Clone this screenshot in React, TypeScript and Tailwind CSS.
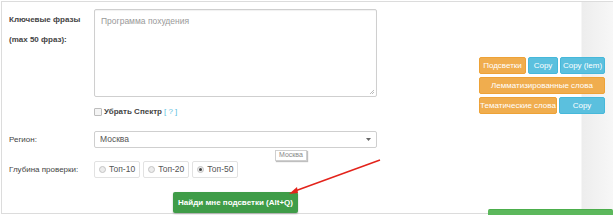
import React from 'react';

const orange = 'bg-[#f0ad4e] border border-[#eea236]';
const blue = 'bg-[#5bc0de] border border-[#46b8da]';

function SmallButton({ label, className }: { label: string; className: string }) {
    return (
        <button
            className={`h-[17px] rounded-[2px] text-[8px] leading-none text-white whitespace-nowrap flex items-center justify-center ${className}`}
        >
            {label}
        </button>
    );
}

function RadioBox({ label, checked }: { label: string; checked?: boolean }) {
    return (
        <label className="h-[17px] px-[4px] flex items-center gap-[3px] rounded-[2px] border border-[#e2e2e2] text-[8.5px] text-[#555]">
            <span className="w-[7px] h-[7px] rounded-full border border-[#c4c4c4] bg-[#ececec] flex items-center justify-center">
                {checked && <span className="w-[3px] h-[3px] rounded-full bg-[#444]" />}
            </span>
            {label}
        </label>
    );
}

export default function App() {
    return (
        <div className="relative w-[613px] h-[215px] overflow-hidden bg-white font-['Liberation_Sans',Arial,sans-serif]">
            <div className="mt-px ml-px h-[213px] border-l border-t border-b border-[#dcdcdc] flex bg-[linear-gradient(to_right,#ffffff_579px,#ededed_580px,#f7f7f7_100%)]">
                {/* form */}
                <div className="pl-[7px] pt-[7px] w-[380px]">
                    <div className="grid grid-cols-[85px_283px]">
                        <div className="text-[8px] font-bold text-[#444] leading-[20px] pt-[1px]">
                            <div>Ключевые фразы</div>
                            <div>(max 50 фраз):</div>
                        </div>
                        <div className="relative h-[88px] rounded-[2px] border border-[#cfcfcf] shadow-[inset_0_1px_1px_rgba(0,0,0,0.06)]">
                            <div className="pl-[6px] pt-[5px] text-[8.5px] text-[#999]">Программа похудения</div>
                            <svg className="absolute right-[1px] bottom-[1px]" width="6" height="6" viewBox="0 0 6 6">
                                <path d="M5 1 L1 5 M5 3 L3 5" stroke="#aaa" strokeWidth="0.8" />
                            </svg>
                        </div>
                    </div>

                    <div className="mt-[9px] ml-[85px] flex items-center gap-[2px] text-[8px]">
                        <span className="w-[8px] h-[8px] rounded-[1px] border border-[#bdbdbd] bg-[#f4f4f4]" />
                        <span className="font-bold text-[#444]">Убрать Спектр</span>
                        <span className="text-[#5bc0de]">[ ? ]</span>
                    </div>

                    <div className="mt-[13px] grid grid-cols-[85px_283px] items-center">
                        <div className="text-[8px] text-[#444]">Регион:</div>
                        <div className="h-[17px] rounded-[2px] border border-[#cfcfcf] flex items-center justify-between pl-[5px] pr-[5px] text-[8.5px] text-[#555]">
                            <span>Москва</span>
                            <svg width="5" height="3" viewBox="0 0 5 3">
                                <path d="M0 0 L5 0 L2.5 3 Z" fill="#666" />
                            </svg>
                        </div>
                    </div>

                    <div className="mt-[13px] grid grid-cols-[85px_283px] items-center">
                        <div className="text-[8px] text-[#444]">Глубина проверки:</div>
                        <div className="flex gap-[3px]">
                            <RadioBox label="Топ-10" />
                            <RadioBox label="Топ-20" />
                            <RadioBox label="Топ-50" checked />
                        </div>
                    </div>

                    <div className="mt-[14px] ml-[85px] w-[283px] flex justify-center">
                        <button className="w-[125px] h-[21px] rounded-[2px] bg-[#3f9c48] text-white text-[8px] font-bold whitespace-nowrap shadow-[0_1px_2px_rgba(0,0,0,0.25)]">
                            Найди мне подсветки (Alt+Q)
                        </button>
                    </div>
                </div>

                {/* right button panel */}
                <div className="ml-auto mr-[8px] mt-[55px] w-[126px] flex flex-col gap-[3px]">
                    <div className="flex gap-[2px]">
                        <SmallButton label="Подсветки" className={`${orange} w-[47px]`} />
                        <SmallButton label="Copy" className={`${blue} w-[30px]`} />
                        <SmallButton label="Copy (lem)" className={`${blue} flex-1`} />
                    </div>
                    <SmallButton label="Лемматизированные слова" className={`${orange} w-full`} />
                    <div className="flex gap-[2px]">
                        <SmallButton label="Тематические слова" className={`${orange} w-[78px]`} />
                        <SmallButton label="Copy" className={`${blue} flex-1`} />
                    </div>
                </div>
            </div>

            {/* tooltip */}
            <div className="absolute left-[275px] top-[150px] px-[3px] h-[11px] flex items-center border border-[#cfcfcf] bg-white text-[7px] text-[#888] shadow-[1px_1px_1px_rgba(0,0,0,0.25)]">
                Москва
            </div>

            {/* red arrow */}
            <svg className="absolute left-0 top-0 pointer-events-none" width="613" height="215">
                <line x1="380" y1="160" x2="295" y2="191" stroke="#e3231b" strokeWidth="1.5" />
                <path d="M289 194 L297 187 L298 193 Z" fill="#e3231b" />
            </svg>

            {/* partially visible button at the bottom */}
            <div className="absolute left-[488px] top-[209px] w-[125px] h-[10px] rounded-t-[2px] bg-[#5cb85c] border-t border-[#4cae4c]" />
        </div>
    );
}
